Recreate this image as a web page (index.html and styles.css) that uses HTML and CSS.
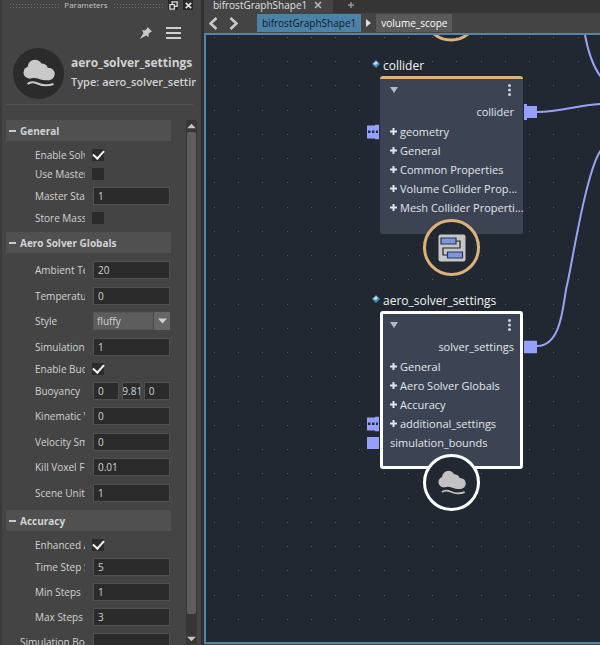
FILE: index.html
```html
<!DOCTYPE html>
<html lang="en">
<head>
<meta charset="utf-8">
<title>Bifrost Graph Editor</title>
<link rel="stylesheet" href="styles.css">
</head>
<body>
<svg class="defs" aria-hidden="true">
  <symbol id="cloud" viewBox="0 0 32 28">
    <g fill="currentColor"><circle cx="6.500" cy="13.500" r="6"/><circle cx="12" cy="8" r="7.300"/><circle cx="19" cy="10.500" r="6"/><circle cx="25.500" cy="15" r="6.200"/>
    <path d="M5 12h22v9q-3 .7-7 0c-4-1-6-2.500-10-2l-4 .5z"/></g>
    <path fill="none" stroke="currentColor" stroke-width="2" d="M4.500 25c3-2.500 6-2.300 10-.5s9 3 16 .5"/>
  </symbol>
  <symbol id="plus" viewBox="0 0 7 7"><path fill="none" stroke="currentColor" stroke-width="2" d="M0 3.500h7M3.500 0v7"/></symbol>
  <symbol id="pin" viewBox="0 0 8 8"><path fill="#4b8bb0" d="M4 0l4 4-4 4-4-4z"/><path fill="#b9dff0" d="M4 1l2 2-2 2-3-1z"/></symbol>
  <symbol id="more" viewBox="0 0 3 12"><g fill="currentColor"><circle cx="1.500" cy="1.500" r="1.500"/><circle cx="1.500" cy="6" r="1.500"/><circle cx="1.500" cy="10.500" r="1.500"/></g></symbol>
  <symbol id="multi" viewBox="0 0 12 15"><path fill="#94a0fa" d="M0 1h8V0h4v15H8v-1H0z"/><path fill="#202852" d="M1 6h2.500v2.500H1zM5 6h2.500v2.500H5zM9 6h2v2.500H9z"/></symbol>
</svg>
<div class="app">
  <aside class="panel">
    <header class="dock">
      <span class="grip"></span><span>Parameters</span><span class="grip"></span>
      <button class="dock-btn" aria-label="Float"><svg viewBox="0 0 10 10"><path fill="none" stroke="#ddd" stroke-width="1.500" d="M3.500 4V1h5.500v5H6M1 4h5v5H1z"/></svg></button>
      <button class="dock-btn" aria-label="Close"><svg viewBox="0 0 10 10"><path stroke="#ddd" stroke-width="2" d="M2 2l6 6M8 2L2 8"/></svg></button>
    </header>
    <div class="tools">
      <button aria-label="Pin"><svg width="12" height="12" viewBox="0 0 12 12"><path fill="#c8c8c8" d="M7.500 0L12 4.500l-1.500.5-2 2 .2 3L6 8.500 0 12l3.500-6L2 3.300l3 .2 2-2z"/></svg></button>
      <button aria-label="Menu"><svg width="15" height="12" viewBox="0 0 15 12"><path fill="#d0d0d0" d="M0 0h15v2H0zM0 5h15v2H0zM0 10h15v2H0z"/></svg></button>
    </div>
    <div class="identity">
      <span class="avatar"><svg width="32" height="28"><use href="#cloud"/></svg></span>
      <div class="names"><h1>aero_solver_settings</h1><p>Type: aero_solver_settings</p></div>
    </div>
    <div class="scroll">
      <form class="params">
        <section>
          <h2><span class="dash"></span>General</h2>
          <div class="rows">
            <div class="row check"><label for="p1">Enable Solver</label><input id="p1" type="checkbox" checked></div>
            <div class="row check"><label for="p2">Use Master Voxel</label><input id="p2" type="checkbox"></div>
            <div class="row"><label for="p3">Master Start</label><input id="p3" type="text" value="1"></div>
            <div class="row check"><label for="p4">Store Mass</label><input id="p4" type="checkbox"></div>
          </div>
        </section>
        <section class="globals">
          <h2><span class="dash"></span>Aero Solver Globals</h2>
          <div class="rows">
            <div class="row"><label for="p5">Ambient Temperature</label><input id="p5" type="text" value="20"></div>
            <div class="row"><label for="p6">Temperature</label><input id="p6" type="text" value="0"></div>
            <div class="row"><label for="p7">Style</label><span class="combo"><select id="p7"><option>fluffy</option></select><svg viewBox="0 0 16 17"><path fill="#d0d0d0" d="M4 6h9L8.500 11z"/></svg></span></div>
            <div class="row"><label for="p8">Simulation Scale</label><input id="p8" type="text" value="1"></div>
            <div class="row check"><label for="p9">Enable Buoyancy</label><input id="p9" type="checkbox" checked></div>
            <div class="row"><label for="p10">Buoyancy</label><span class="triple"><input id="p10" type="text" value="0"><input class="tight" type="text" value="9.81" aria-label="Buoyancy Y"><input type="text" value="0" aria-label="Buoyancy Z"></span></div>
            <div class="row"><label for="p11">Kinematic Viscosity</label><input id="p11" type="text" value="0"></div>
            <div class="row"><label for="p12">Velocity Smoothing</label><input id="p12" type="text" value="0"></div>
            <div class="row"><label for="p13">Kill Voxel Fog</label><input id="p13" type="text" value="0.01"></div>
            <div class="row"><label for="p14">Scene Units</label><input id="p14" type="text" value="1"></div>
          </div>
        </section>
        <section>
          <h2><span class="dash"></span>Accuracy</h2>
          <div class="rows">
            <div class="row check"><label for="p15">Enhanced Advection</label><input id="p15" type="checkbox" checked></div>
            <div class="row"><label for="p16">Time Step Size</label><input id="p16" type="text" value="5"></div>
            <div class="row"><label for="p17">Min Steps</label><input id="p17" type="text" value="1"></div>
            <div class="row"><label for="p18">Max Steps</label><input id="p18" type="text" value="3"></div>
            <div class="row outdent"><label for="p19">Simulation Bounds</label><input id="p19" type="text"></div>
          </div>
        </section>
      </form>
      <div class="bar">
        <svg viewBox="0 0 10 10"><path fill="#c4c4c4" d="M1 7h8L5 3z"/></svg>
        <span class="thumb"></span>
        <svg viewBox="0 0 10 10"><path fill="#c4c4c4" d="M1 3h8L5 7z"/></svg>
      </div>
    </div>
  </aside>

  <main class="editor">
    <div class="tabs">
      <div class="tab">bifrostGraphShape1<button aria-label="Close tab"><svg width="8" height="8" viewBox="0 0 8 8"><path stroke="#bbb" stroke-width="1.500" d="M1 1l6 6M7 1L1 7"/></svg></button></div>
      <button class="add" aria-label="New tab"><svg width="6" height="6" viewBox="0 0 6 6"><path stroke="#bbb" d="M0 3h6M3 0v6"/></svg></button>
    </div>
    <nav class="crumbs">
      <button aria-label="Back"><svg width="9" height="13" viewBox="0 0 9 13"><path fill="none" stroke="#ccc" stroke-width="2.500" d="M7.500 1l-6 5.500 6 5.500"/></svg></button>
      <button aria-label="Forward"><svg width="9" height="13" viewBox="0 0 9 13"><path fill="none" stroke="#ccc" stroke-width="2.500" d="M1.500 1l6 5.500-6 5.500"/></svg></button>
      <a class="crumb root" href="#">bifrostGraphShape1</a>
      <svg width="5" height="8" viewBox="0 0 5 8"><path fill="#ddd" d="M0 0l5 4-5 4z"/></svg>
      <a class="crumb" href="#">volume_scope</a>
    </nav>
    <div class="canvas">
      <svg class="wires" aria-hidden="true">
        <defs>
          <pattern id="grid" x="8" y="2" width="97" height="97" patternUnits="userSpaceOnUse">
            <path stroke="#566069" stroke-width="1" stroke-dasharray="1 23 1 23 1 24 1 23" d="M0 .5h97M0 24.500h97M0 48.500h97M0 73.500h97"/>
          </pattern>
        </defs>
        <rect width="100%" height="600" fill="url(#grid)"/>
        <circle cx="245" cy="-22" r="27" fill="none" stroke="#dcb17c" stroke-width="3"/>
        <g fill="none" stroke="#98a3f7" stroke-width="2">
          <path d="M331 77C354 77 372 70 395 69"/>
          <path d="M379 0C382 16 388 33 395 42"/>
          <path d="M331 311C357 311 357 265 361 250S380 135 395 115"/>
        </g>
      </svg>

      <article class="node collider">
        <h3><svg width="8" height="8"><use href="#pin"/></svg>collider</h3>
        <div class="box">
          <div class="head"><button aria-label="Collapse"><svg width="8" height="6" viewBox="0 0 8 6"><path fill="#b4bac6" d="M0 0h8L4 6z"/></svg></button><button aria-label="Options"><svg width="3" height="12"><use href="#more"/></svg></button></div>
          <div class="out">collider<svg class="port right" width="13" height="16" viewBox="0 0 13 16"><path fill="#94a0fa" d="M0 0h3v2h10v12H3v2H0z"/></svg></div>
          <ul>
            <li><svg width="7" height="7"><use href="#plus"/></svg>geometry<svg class="port left" width="12" height="15"><use href="#multi"/></svg></li>
            <li><svg width="7" height="7"><use href="#plus"/></svg>General</li>
            <li><svg width="7" height="7"><use href="#plus"/></svg>Common Properties</li>
            <li><svg width="7" height="7"><use href="#plus"/></svg>Volume Collider Prop...</li>
            <li><svg width="7" height="7"><use href="#plus"/></svg>Mesh Collider Properti...</li>
          </ul>
        </div>
        <span class="badge"><svg width="28" height="28" viewBox="0 0 28 28"><rect width="27" height="27" x=".5" y=".5" rx="2" fill="#c6c6c4"/><path fill="none" stroke="#222" stroke-width="1.200" d="M18 7h4v7H5v7h5"/><path fill="#7f96dc" stroke="#26345c" stroke-width="1.200" d="M3 4h15v6H3zM9.500 18h15v6h-15z"/></svg></span>
      </article>

      <article class="node solver">
        <h3><svg width="8" height="8"><use href="#pin"/></svg>aero_solver_settings</h3>
        <div class="box">
          <div class="head"><button aria-label="Collapse"><svg width="8" height="6" viewBox="0 0 8 6"><path fill="#b4bac6" d="M0 0h8L4 6z"/></svg></button><button aria-label="Options"><svg width="3" height="12"><use href="#more"/></svg></button></div>
          <div class="out">solver_settings<svg class="port right" width="13" height="13" viewBox="0 0 13 13"><path fill="#94a0fa" d="M0 0h13v13H0z"/></svg></div>
          <ul>
            <li><svg width="7" height="7"><use href="#plus"/></svg>General</li>
            <li><svg width="7" height="7"><use href="#plus"/></svg>Aero Solver Globals</li>
            <li><svg width="7" height="7"><use href="#plus"/></svg>Accuracy</li>
            <li><svg width="7" height="7"><use href="#plus"/></svg>additional_settings<svg class="port left" width="12" height="15"><use href="#multi"/></svg></li>
            <li>simulation_bounds<svg class="port left" width="12" height="12" viewBox="0 0 12 12"><path fill="#94a0fa" d="M0 0h12v12H0z"/></svg></li>
          </ul>
        </div>
        <span class="badge"><svg width="28" height="25"><use href="#cloud"/></svg></span>
      </article>
    </div>
  </main>
</div>
</body>
</html>
```
FILE: styles.css
```css
* { box-sizing: border-box; margin: 0; padding: 0; }
body { background: #444; color: #d2d2d2; font: 10px/16px "Open Sans", "Noto Sans", sans-serif; }
button { background: none; border: 0; color: inherit; font: inherit; display: flex; align-items: center; justify-content: center; }
svg { display: block; flex: none; }
.defs { position: absolute; width: 0; height: 0; }
.app { display: flex; height: 100vh; overflow: hidden; }

.panel { flex: 0 0 204px; display: flex; flex-direction: column; min-height: 0; padding: 0 8px 0 4px; border-left: 2px solid #3a3a3a; border-right: 3px solid #303030; overflow: hidden; }
.dock { display: flex; align-items: center; gap: 5px; height: 10px; padding-left: 3px; font-size: 8px; line-height: 10px; color: #c4c4c4; flex: none; }
.grip { flex: 1; height: 5px; background: radial-gradient(circle, #6c6c6c 1px, transparent 1px) 0 0 / 3px 3px; }
.dock-btn { width: 10px; height: 10px; background: #292929; }
.dock-btn svg { width: 9px; height: 9px; }
.tools { display: flex; justify-content: flex-end; align-items: center; gap: 14px; height: 34px; margin-top: 6px; padding-right: 12px; flex: none; }
.identity { display: flex; align-items: center; gap: 7px; height: 55px; padding: 0 0 8px 7px; border-bottom: 1px solid #525252; flex: none; }
.avatar { width: 51px; height: 51px; flex: none; border-radius: 50%; background: #2b2b2b; color: #c9c9c9; display: grid; place-items: center; }
.names { flex: 1; min-width: 0; overflow: hidden; white-space: nowrap; margin-right: -3px; padding-bottom: 3px; }
.names h1 { font-size: 12px; line-height: 20px; font-weight: 700; }
.names p { font-size: 11px; line-height: 18px; font-weight: 600; }

.scroll { display: flex; flex: 1; min-height: 0; padding-top: 15px; margin-right: -4px; }
.params { flex: 1; min-width: 0; padding-right: 15px; overflow: hidden; }
.params h2 { display: flex; align-items: center; gap: 4px; height: 21px; padding-left: 3px; background: #505050; font-size: 10px; font-weight: 700; white-space: nowrap; }
.dash { width: 7px; height: 2px; background: #c8c8c8; }
.rows { padding: 4px 0 5px 29px; }
.row { display: flex; align-items: center; gap: 8px; height: 25px; padding-right: 1px; }
.globals .row:nth-child(odd) { height: 26px; }
.row.check, .globals .row.check { height: 19px; }
.row label { width: 50px; flex: none; overflow: hidden; white-space: nowrap; }
.outdent { margin-left: -15px; }
.outdent label { width: 65px; }
.row input[type="text"] { flex: 1; min-width: 0; width: 0; height: 18px; padding: 0 4px; background: #2b2b2b; border: 1px solid #505050; color: #d2d2d2; font: inherit; }
.row input[type="checkbox"] { appearance: none; width: 12px; height: 12px; margin-left: -1px; background: #2b2b2b; display: grid; place-items: center; }
.row input:checked::after { content: ""; width: 9px; height: 5px; border: solid #f2f2f2; border-width: 0 0 2px 2px; transform: translateY(-1px) rotate(-48deg); }
.triple { display: flex; flex: 1; gap: 3px; min-width: 0; }
.row .triple input.tight { padding: 0; text-indent: -1px; }
.combo { display: grid; flex: 1; height: 18px; }
.combo > * { grid-area: 1 / 1; }
.combo select { appearance: none; width: 100%; border: 1px solid #555; padding: 0 3px; background: #5d5d5d; color: #d2d2d2; font: inherit; }
.combo svg { justify-self: end; width: 17px; height: 18px; background: #666; border-left: 1px solid #484848; pointer-events: none; }
.bar { width: 11px; flex: none; display: flex; flex-direction: column; background: #373737; }
.bar svg { width: 11px; height: 12px; }
.thumb { height: 482px; margin: 0 1px; border-radius: 2px; background: #5e5e5e; }
.bar svg:last-child { margin-top: auto; }

.editor { flex: 1; min-width: 0; display: flex; flex-direction: column; }
.tabs { display: flex; height: 13px; background: #353535; flex: none; }
.tab { display: flex; align-items: center; gap: 7px; padding: 0 11px 4px 9px; background: #444; color: #e0e0e0; line-height: 12px; }
.add { width: 36px; padding-bottom: 3px; }
.crumbs { display: flex; align-items: center; gap: 5px; height: 20px; padding-left: 2px; flex: none; }
.crumbs button { width: 15px; height: 18px; }
.crumb { padding: 0 5px; line-height: 18px; background: #5a5a5a; color: #fff; text-decoration: none; font-weight: 500; }
.crumb.root { margin-left: 11px; background: #4c82a8; color: #0c1a2a; }
.canvas { position: relative; flex: 1; overflow: hidden; margin-bottom: 1px; border: solid #5585a5; border-width: 2px 0 2px 2px; background: #222831; color: #e2e5e9; font-size: 11px; }
.wires { position: absolute; inset: 0; width: 100%; height: 100%; }

.node { position: absolute; left: 161px; width: 170px; }
.collider { top: 21px; --edge: #3c4453; --ring: #dcb17c; }
.solver { top: 256px; --edge: #fff; --ring: #fff; }
.node h3 { display: flex; align-items: center; gap: 3px; height: 20px; padding-left: 5px; font-size: 12px; font-weight: 400; color: #f2f2f2; }
.node h3 svg { margin-bottom: 4px; }
.box { margin: 0 14px 0 13px; padding-bottom: 14px; border: 3px solid var(--edge); border-top-color: var(--ring); border-radius: 3px; background: #3c4453; white-space: nowrap; }
.collider .box { border-width: 3px 0 0; padding: 0 3px 17px; }
.head { display: flex; align-items: center; justify-content: space-between; height: 23px; padding: 0 9px 2px 7px; }
.head button:last-child { color: #cdd1d8; }
.out { position: relative; height: 20px; padding-right: 6px; line-height: 20px; text-align: right; }
.box ul { list-style: none; }
.box li { position: relative; display: flex; align-items: center; gap: 3px; height: 19px; padding-left: 7px; }
.port { position: absolute; top: 50%; transform: translateY(-50%); }
.port.right { left: calc(100% + 4px); }
.port.left { right: calc(100% + 4px); }
.badge { position: absolute; left: 56px; bottom: -42px; width: 57px; height: 57px; border: 3px solid var(--ring); border-radius: 50%; background: #222831; color: #c2c2c2; display: grid; place-items: center; }
```
